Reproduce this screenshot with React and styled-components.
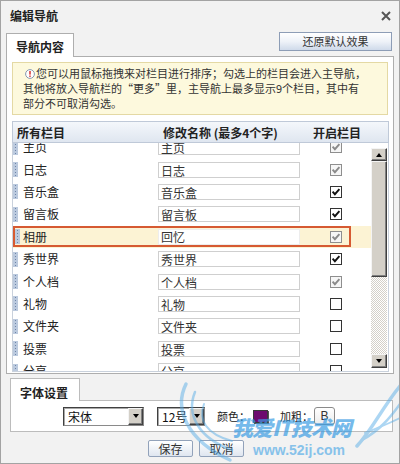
import React from 'react';
import styled, { createGlobalStyle } from 'styled-components';

const GlobalStyle = createGlobalStyle`
  html, body { margin: 0; padding: 0; background: #fff; }
  body { font-family: "Noto Sans CJK SC", "Noto Sans", sans-serif; color: #222; }
  * { box-sizing: border-box; }
`;

const Dialog = styled.div`
  position: relative;
  width: 400px;
  height: 464px;
  border: 1px solid #a3a3a3;
  background: #f2f2f2;
  display: flex;
  flex-direction: column;
  overflow: hidden;
`;

const TitleBar = styled.div`
  height: 29px;
  display: flex;
  align-items: center;
  justify-content: space-between;
  padding: 0 8px 0 9px;
`;

const Title = styled.div`
  font-size: 12px;
  font-weight: 700;
  line-height: 14px;
  color: #222;
`;

const CloseBtn = styled.div`
  width: 10px;
  height: 10px;
  display: flex;
`;

const Body = styled.div`
  padding: 0 5px;
  display: flex;
  flex-direction: column;
`;

const TabRow = styled.div`
  position: relative;
  z-index: 1;
  height: 26px;
  display: flex;
  justify-content: space-between;
  align-items: flex-start;
`;

const Tab = styled.div`
  margin-top: 3px;
  width: 68px;
  height: 24px;
  background: #fff;
  border: 1px solid #aeaeae;
  border-bottom: none;
  font-size: 12px;
  font-weight: 700;
  line-height: 14px;
  padding: 6px 0 0 9px;
  color: #222;
`;

const ResetButton = styled.div`
  margin: 2px 2px 0 0;
  width: 113px;
  height: 19px;
  border: 1px solid #8d9db6;
  background: linear-gradient(#ffffff 0%, #eef2f8 50%, #cfdaea 100%);
  font-size: 11px;
  line-height: 17px;
  text-align: center;
  color: #333;
`;

const Panel = styled.div`
  background: #fff;
  border: 1px solid #aeaeae;
  padding: 5px 4px 1px 5px;
  display: flex;
  flex-direction: column;
`;

const Notice = styled.div`
  margin-right: 1px;
  border: 1px solid #e4d9a4;
  background: #fdf9dd;
  padding: 3px 10px;
  font-size: 11px;
  line-height: 15px;
  color: #333;
  white-space: nowrap;
`;

const NoticeIcon = styled.svg`
  width: 10px;
  height: 10px;
  margin: 0 1px 0 2px;
  vertical-align: -1px;
`;

const TableHead = styled.div`
  margin-top: 6px;
  height: 22px;
  display: grid;
  grid-template-columns: 146px 150px 1fr;
  align-items: center;
  padding-left: 4px;
  border: 1px solid #bfc9d8;
  background: linear-gradient(#f4f7fb, #dfe6f0);
  font-size: 12px;
  font-weight: 700;
  color: #222;
  white-space: nowrap;
`;

const List = styled.div`
  height: 229px;
  display: flex;
  border: 1px solid #c9d1dc;
  border-top: none;
  background: #fff;
`;

const Viewport = styled.div`
  flex: 1;
  overflow: hidden;
`;

const Rows = styled.div`
  margin-top: -7px;
`;

const Row = styled.div`
  height: 22.4px;
  display: flex;
  align-items: center;
  background: ${p => (p.$hl ? '#fcf3d4' : 'transparent')};
`;

const Frame = styled.div`
  width: 338px;
  height: 21px;
  display: flex;
  align-items: center;
  outline: ${p => (p.$hl ? '2px solid #d65a32' : 'none')};
  outline-offset: -2px;
`;

const Handle = styled.div`
  width: 5px;
  height: 15px;
  margin: 0 ${p => (p.$hl ? 3 : 5)}px 0 ${p => (p.$hl ? 2 : 0)}px;
  background-color: #bccade;
  background-image: repeating-linear-gradient(#6f86aa 0 1px, transparent 1px 3px);
  background-size: 1px 100%;
  background-position: 2px 1px;
  background-repeat: no-repeat;
`;

const Name = styled.div`
  width: 135px;
  font-size: 12px;
  line-height: 14px;
  color: #222;
`;

const NameInput = styled.div`
  width: 142px;
  height: 16px;
  border: 1px solid ${p => (p.$hl ? '#ededed' : '#cfcfcf')};
  background: #fff;
  padding: ${p => (p.$hl ? '0 2px 2px' : '1px 2px 0')};
  font-size: 12px;
  line-height: 13px;
  color: #333;
  overflow: hidden;
`;

const CheckSvg = styled.svg`
  margin-left: 30px;
  width: 12px;
  height: 12px;
  flex: none;
`;

const ScrollBar = styled.div`
  width: 16px;
  margin: 5px 1px 3px 0;
  display: flex;
  flex-direction: column;
  background-color: #fff;
  background-image: repeating-conic-gradient(#d4d0c8 0 25%, #ffffff 0 50%);
  background-size: 2px 2px;
`;

const Bevel = styled.div`
  height: ${p => p.$h}px;
  flex: none;
  background: #d4d0c8;
  border: 1px solid;
  border-color: #f4f4f4 #404040 #404040 #f4f4f4;
  box-shadow: inset -1px -1px #808080;
  display: flex;
  align-items: center;
  justify-content: center;
`;

const Arrow = styled.div`
  width: 0;
  height: 0;
  border-left: 3.5px solid transparent;
  border-right: 3.5px solid transparent;
  ${p => (p.$up ? 'border-bottom: 4px solid #000;' : 'border-top: 4px solid #000;')}
`;

const FontSection = styled.div`
  margin: 4px 1px 0 4px;
  display: flex;
  flex-direction: column;
`;

const FontTab = styled.div`
  position: relative;
  z-index: 1;
  width: 70px;
  height: 23px;
  margin-bottom: -1px;
  background: #fff;
  border: 1px solid #bcbcbc;
  border-bottom: none;
  font-size: 12px;
  font-weight: 700;
  line-height: 14px;
  padding: 7px 0 0 9px;
  color: #222;
`;

const FontPanel = styled.div`
  height: 32px;
  border: 1px solid #bcbcbc;
  background: #fff;
  display: flex;
  align-items: center;
  padding-left: 52px;
`;

const Select = styled.div`
  width: ${p => p.$w}px;
  height: 19px;
  margin-left: ${p => p.$ml || 0}px;
  display: flex;
  border: 1px solid;
  border-color: #404040 #8a8a8a #8a8a8a #404040;
  box-shadow: inset 1px 1px #a8a8a8;
  background: #fff;
`;

const SelectText = styled.div`
  flex: 1;
  font-size: 12px;
  line-height: 17px;
  padding-left: 4px;
  color: #111;
`;

const SelectArrow = styled(Bevel)`
  width: 15px;
  height: 17px;
`;

const Label = styled.div`
  margin-left: 12px;
  font-size: 11px;
  line-height: 14px;
  color: #222;
`;

const Swatch = styled.div`
  margin-left: 3px;
  width: 15px;
  height: 13px;
  background: #6d0b6f;
  border: 1px solid #3a3a3a;
  box-shadow: 1px 1px 0 #555;
`;

const BoldBtn = styled.div`
  margin-left: 1px;
  width: 21px;
  height: 18px;
  border: 1px solid #8a8a8a;
  border-radius: 3px;
  background: linear-gradient(#ffffff, #ececec);
  font-family: "Liberation Sans", Arial, sans-serif;
  font-size: 12px;
  line-height: 16px;
  text-align: center;
  color: #333;
`;

const ButtonRow = styled.div`
  margin-top: 8px;
  padding-right: 8px;
  display: flex;
  justify-content: center;
  gap: 6px;
`;

const Button = styled.div`
  width: 45px;
  height: 17px;
  border: 1px solid #92a2ba;
  border-radius: 2px;
  background: linear-gradient(#ffffff, #dfe6f0);
  font-size: 12px;
  line-height: 15px;
  text-align: center;
  color: #333;
`;

const Watermark = styled.div`
  position: absolute;
  left: 167px;
  top: 377px;
  width: 232px;
  height: 86px;
  pointer-events: none;
  opacity: 0.7;
`;

const WingSvg = styled.svg`
  position: absolute;
  left: 0;
  top: 0;
  width: 232px;
  height: 86px;
`;

const WmTitle = styled.div`
  position: absolute;
  left: 64px;
  top: 37px;
  font-size: 21px;
  line-height: 24px;
  font-weight: 900;
  font-style: italic;
  letter-spacing: -1px;
  color: #3c9de3;
  white-space: nowrap;
`;

const WmUrl = styled.div`
  position: absolute;
  left: 85px;
  top: 64px;
  font-family: "Liberation Sans", Arial, sans-serif;
  font-size: 14px;
  line-height: 16px;
  font-weight: 700;
  color: #5aaee8;
  white-space: nowrap;
`;

const rows = [
  { name: '主页', value: '主页', state: 'disabled' },
  { name: '日志', value: '日志', state: 'disabled' },
  { name: '音乐盒', value: '音乐盒', state: 'on' },
  { name: '留言板', value: '留言板', state: 'on' },
  { name: '相册', value: '回忆', state: 'disabled', hl: true },
  { name: '秀世界', value: '秀世界', state: 'on' },
  { name: '个人档', value: '个人档', state: 'disabled' },
  { name: '礼物', value: '礼物', state: 'off' },
  { name: '文件夹', value: '文件夹', state: 'off' },
  { name: '投票', value: '投票', state: 'off' },
  { name: '分享', value: '分享', state: 'off' },
];

function CheckBox({ state }) {
  const dis = state === 'disabled';
  return (
    <CheckSvg viewBox="0 0 12 12">
      <rect x="0.5" y="0.5" width="11" height="11" fill={dis ? '#f6f6f6' : '#fff'} stroke={dis ? '#8e8e8e' : '#333'} />
      {state !== 'off' && (
        <path d="M2.6 5.6 L4.9 8.2 L9.4 3.2" fill="none" stroke={dis ? '#8a8a8a' : '#111'} strokeWidth="1.9" />
      )}
    </CheckSvg>
  );
}

export default function App() {
  return (
    <>
      <GlobalStyle />
      <Dialog>
        <TitleBar>
          <Title>编辑导航</Title>
          <CloseBtn>
            <svg width="10" height="10" viewBox="0 0 10 10">
              <path d="M1 1 L9 9 M9 1 L1 9" stroke="#555" strokeWidth="2" />
            </svg>
          </CloseBtn>
        </TitleBar>
        <Body>
          <TabRow>
            <Tab>导航内容</Tab>
            <ResetButton>还原默认效果</ResetButton>
          </TabRow>
          <Panel>
            <Notice>
              <NoticeIcon viewBox="0 0 10 10">
                <circle cx="5" cy="5" r="4.4" fill="#fff" stroke="#8797b0" strokeWidth="1" />
                <rect x="4.3" y="2" width="1.4" height="3.6" fill="#d42020" />
                <rect x="4.3" y="6.5" width="1.4" height="1.4" fill="#d42020" />
              </NoticeIcon>
              您可以用鼠标拖拽来对栏目进行排序；勾选上的栏目会进入主导航，
              <br />
              其他将放入导航栏的“更多”里，主导航上最多显示9个栏目，其中有
              <br />
              部分不可取消勾选。
            </Notice>
            <TableHead>
              <span>所有栏目</span>
              <span>修改名称 (最多4个字)</span>
              <span>开启栏目</span>
            </TableHead>
            <List>
              <Viewport>
                <Rows>
                  {rows.map(r => (
                    <Row key={r.name} $hl={r.hl}>
                      <Frame $hl={r.hl}>
                        <Handle $hl={r.hl} />
                        <Name>{r.name}</Name>
                        <NameInput $hl={r.hl}>{r.value}</NameInput>
                        <CheckBox state={r.state} />
                      </Frame>
                    </Row>
                  ))}
                </Rows>
              </Viewport>
              <ScrollBar>
                <Bevel $h={13}><Arrow $up /></Bevel>
                <Bevel $h={116} />
                <div style={{ flex: 1 }} />
                <Bevel $h={14}><Arrow /></Bevel>
              </ScrollBar>
            </List>
          </Panel>
          <FontSection>
            <FontTab>字体设置</FontTab>
            <FontPanel>
              <Select $w={81}>
                <SelectText>宋体</SelectText>
                <SelectArrow><Arrow /></SelectArrow>
              </Select>
              <Select $w={48} $ml={13}>
                <SelectText>12号</SelectText>
                <SelectArrow><Arrow /></SelectArrow>
              </Select>
              <Label>颜色：</Label>
              <Swatch />
              <Label>加粗：</Label>
              <BoldBtn>B</BoldBtn>
            </FontPanel>
          </FontSection>
          <ButtonRow>
            <Button>保存</Button>
            <Button>取消</Button>
          </ButtonRow>
        </Body>
        <Watermark>
          <WingSvg viewBox="0 0 232 86">
            <g fill="none" stroke="#5aaee8" strokeLinecap="round" opacity="0.7">
              <path d="M18 6 C 6 30, 18 62, 62 82" strokeWidth="3.5" />
              <path d="M27 14 C 18 36, 30 60, 64 72" strokeWidth="2.5" />
              <path d="M36 26 C 30 42, 38 56, 64 63" strokeWidth="2" />
              <path d="M189 68 C 204 52, 214 30, 232 8" strokeWidth="3.5" />
              <path d="M194 62 C 212 52, 222 40, 232 26" strokeWidth="2.5" />
              <path d="M197 55 C 212 49, 224 44, 232 40" strokeWidth="2" />
            </g>
          </WingSvg>
          <WmTitle>我爱IT技术网</WmTitle>
          <WmUrl>www.52ij.com</WmUrl>
        </Watermark>
      </Dialog>
    </>
  );
}
